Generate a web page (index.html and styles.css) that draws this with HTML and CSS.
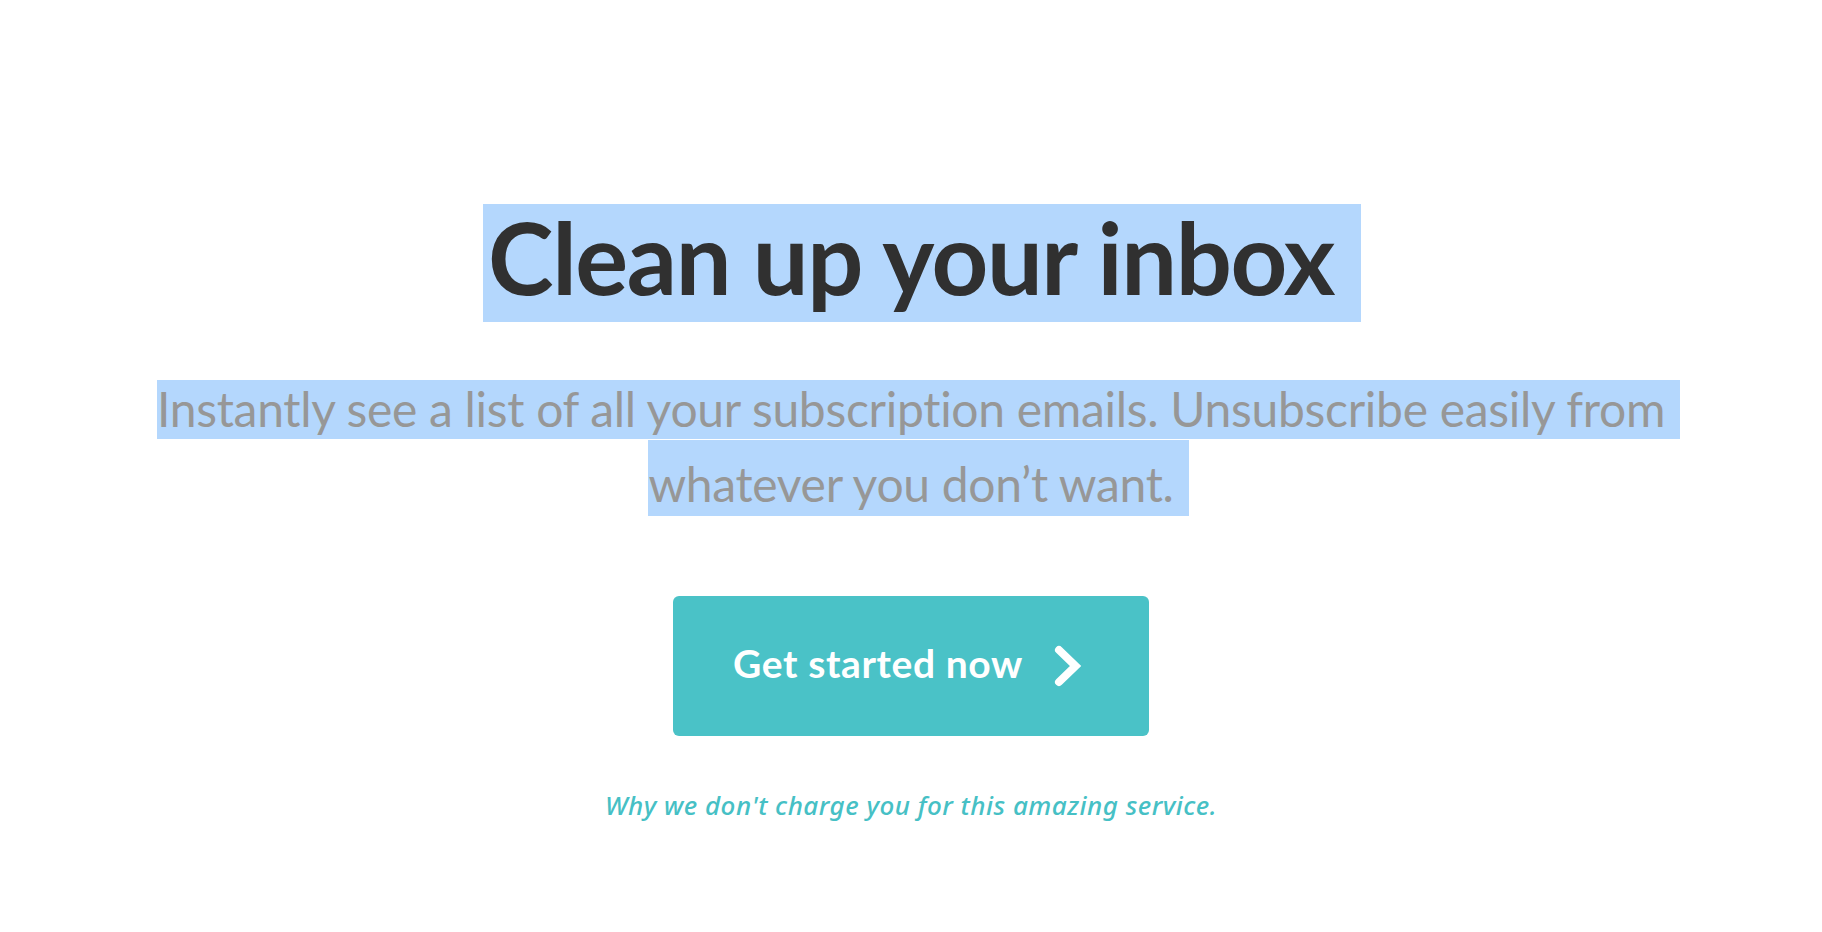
FILE: index.html
```html
<!DOCTYPE html>
<html lang="en">
<head>
<meta charset="utf-8">
<title>Clean up your inbox</title>
<link rel="stylesheet" href="styles.css">
</head>
<body>
<main class="hero">
  <h1 class="hero-title"><span class="hl-title">Clean up your inbox</span></h1>
  <p class="hero-sub"><span class="hl-line hl-first">Instantly see a list of all your subscription emails. Unsubscribe easily from</span> <span class="hl-line hl-second">whatever you don’t want.</span></p>
  <a class="cta" href="#">
    <span class="cta-label">Get started now</span>
    <svg class="cta-icon" width="28" height="42" viewBox="0 0 28 42" aria-hidden="true">
      <path d="M5 5 L21.5 21 L5 37" fill="none" stroke="#ffffff" stroke-width="8" stroke-linecap="round" stroke-linejoin="miter"/>
    </svg>
  </a>
  <a class="why" href="#">Why we don't charge you for this amazing service.</a>
</main>
</body>
</html>
```
FILE: styles.css
```css
html, body {
  margin: 0;
  padding: 0;
  background: #ffffff;
}

.hero {
  display: flex;
  flex-direction: column;
  align-items: center;
  padding-top: 204px;
}

.hero-title {
  display: flex;
  justify-content: center;
  margin: 0;
  font-family: "Lato", "Open Sans", sans-serif;
  font-weight: 700;
  font-size: 99px;
  letter-spacing: -1.4px;
  color: #303030;
}

.hl-title {
  display: block;
  line-height: 106px;
  padding: 0 27px 12px 5px;
  margin: 0 -27px 0 -5px;
  background: #b4d7fd;
}

.hero-sub {
  width: 1560px;
  margin: 49px 0 0;
  text-align: center;
  font-family: "Lato", "Open Sans", sans-serif;
  font-weight: 400;
  font-size: 48px;
  line-height: 75px;
  letter-spacing: -0.3px;
  color: #979797;
}

.hl-line {
  background: #b4d7fd;
  padding-right: 15px;
  margin-right: -15px;
}

.hl-first {
  padding-top: 0;
  padding-bottom: 2px;
}

.hl-second {
  padding-top: 15px;
  padding-bottom: 4px;
}

.cta {
  box-sizing: border-box;
  width: 476px;
  height: 140px;
  margin-top: 75px;
  padding-right: 7px;
  display: flex;
  align-items: center;
  justify-content: center;
  gap: 31px;
  background: #4ac2c7;
  border-radius: 6px;
  text-decoration: none;
  color: #ffffff;
}

.cta-label {
  font-family: "Lato", "Open Sans", sans-serif;
  font-weight: 700;
  font-size: 39px;
  line-height: 39px;
  letter-spacing: 0.6px;
  padding-bottom: 6px;
}

.cta-icon {
  display: block;
  flex: none;
}

.why {
  margin-top: 52px;
  font-family: "Noto Sans", "Open Sans", sans-serif;
  font-style: italic;
  font-weight: 500;
  font-size: 26px;
  line-height: 34px;
  letter-spacing: 0.5px;
  color: #46c0c5;
  text-decoration: none;
}
```
